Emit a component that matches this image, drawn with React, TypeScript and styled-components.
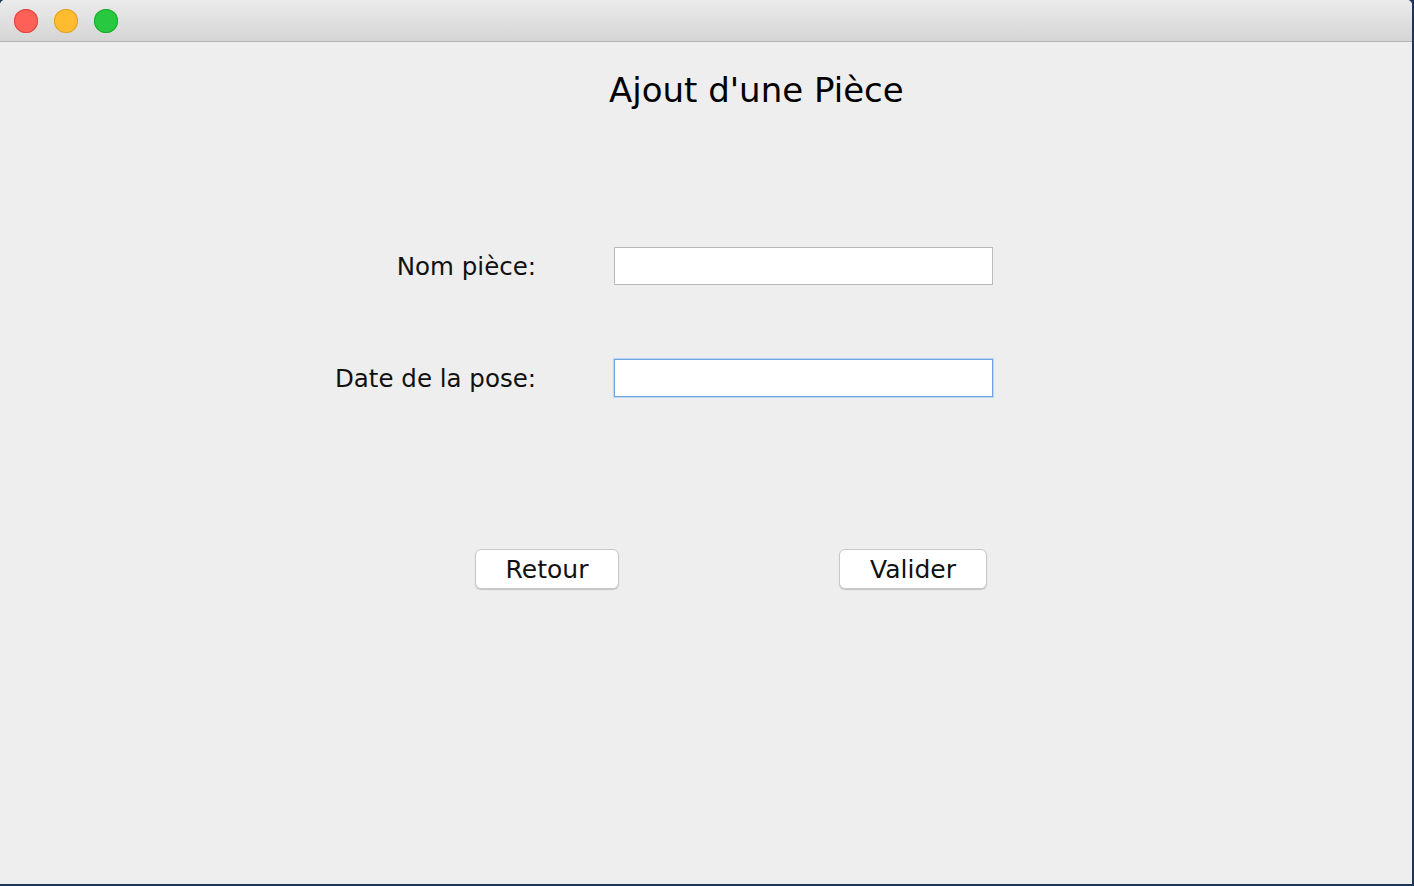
import React from "react";
import styled, { createGlobalStyle } from "styled-components";

const GlobalStyle = createGlobalStyle`
  html, body {
    margin: 0;
    padding: 0;
    background: #1c3559;
    overflow: hidden;
  }
  body {
    font-family: "DejaVu Sans", Verdana, sans-serif;
  }
`;

const Desktop = styled.div`
  width: 1414px;
  height: 886px;
  background: #1c3559;
`;

const Window = styled.div`
  width: 1412px;
  height: 884px;
  display: flex;
  flex-direction: column;
  background: #eeeeee;
  border-radius: 5px 5px 0 0;
  overflow: hidden;
`;

const TitleBar = styled.div`
  height: 41px;
  flex-shrink: 0;
  display: flex;
  align-items: center;
  gap: 16px;
  padding-left: 14px;
  background: linear-gradient(#ebebeb, #d5d5d5);
  border-bottom: 1px solid #b3b3b3;
`;

const Light = styled.span<{ $fill: string; $edge: string }>`
  width: 24px;
  height: 24px;
  border-radius: 50%;
  background: ${(p) => p.$fill};
  box-shadow: inset 0 0 0 1px ${(p) => p.$edge};
`;

const Body = styled.div`
  flex: 1;
  display: flex;
  flex-direction: column;
`;

const Title = styled.h1`
  margin: 0;
  padding: 26px 0 0 609px;
  font-size: 34px;
  font-weight: normal;
  color: #000;
  line-height: 44px;
`;

const Form = styled.div`
  display: grid;
  grid-template-columns: 536px 379px;
  column-gap: 78px;
  row-gap: 74px;
  align-items: center;
  margin-top: 135px;
`;

const Label = styled.label`
  text-align: right;
  font-size: 24.5px;
  color: #111;
`;

const Field = styled.input<{ $focused?: boolean }>`
  box-sizing: border-box;
  width: 379px;
  height: 38px;
  margin: 0;
  padding: 0 6px;
  background: #fff;
  outline: none;
  font: inherit;
  border: 1px solid ${(p) => (p.$focused ? "#6fa3e6" : "#b9b9b9")};
  box-shadow: ${(p) => (p.$focused ? "0 0 0 1px #bcd6f5" : "none")};
`;

const Actions = styled.div`
  display: flex;
  gap: 220px;
  padding-left: 475px;
  margin-top: 152px;
`;

const Button = styled.button<{ $w: number }>`
  width: ${(p) => p.$w}px;
  height: 40px;
  background: #fff;
  border: 1px solid #c8c8c8;
  border-radius: 6px;
  box-shadow: 0 1px 1px rgba(0, 0, 0, 0.18);
  font-family: "DejaVu Sans", Verdana, sans-serif;
  font-size: 25px;
  color: #111;
  padding: 0;
`;

export default function App() {
  return (
    <Desktop>
      <GlobalStyle />
      <Window>
        <TitleBar>
          <Light $fill="#fe5f57" $edge="#e0443e" />
          <Light $fill="#febc2e" $edge="#dea123" />
          <Light $fill="#28c840" $edge="#1aab29" />
        </TitleBar>
        <Body>
          <Title>Ajout d'une Pièce</Title>
          <Form>
            <Label>Nom pièce:</Label>
            <Field />
            <Label>Date de la pose:</Label>
            <Field $focused />
          </Form>
          <Actions>
            <Button $w={144}>Retour</Button>
            <Button $w={148}>Valider</Button>
          </Actions>
        </Body>
      </Window>
    </Desktop>
  );
}
